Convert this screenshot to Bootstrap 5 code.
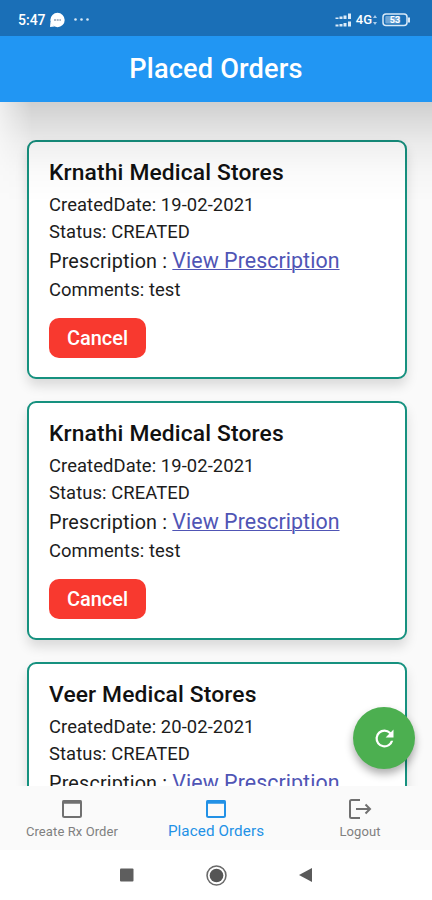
<!DOCTYPE html>
<html lang="en">
<head>
<meta charset="utf-8">
<meta name="viewport" content="width=device-width, initial-scale=1">
<title>Placed Orders</title>
<link href="https://cdn.jsdelivr.net/npm/bootstrap@5.3.0/dist/css/bootstrap.min.css" rel="stylesheet">
<style>
body{font-family:Roboto,"Liberation Sans",sans-serif;background:#fafafa;color:#1c1c1c}
.phone{width:432px;height:900px}
.statusbar{height:36px;background:#1a6fb7;padding:3px 21px 0 18px;font-size:14px;font-weight:500;line-height:1}
.network{font-size:13px}
.appbar{height:66px;background:#2196f3;font-size:27.2px;font-weight:500;letter-spacing:.15px;padding-top:1px}
.orders{height:684px;padding:38px 25px 0 27px;gap:22px}
.orders::before{content:"";position:absolute;inset:0 0 auto 0;height:100px;z-index:2;pointer-events:none;
 background:linear-gradient(rgba(0,0,0,.17),rgba(0,0,0,.115) 20%,rgba(0,0,0,.06) 42%,rgba(0,0,0,.02) 70%,transparent);
 -webkit-mask-image:linear-gradient(90deg,rgba(0,0,0,.3),#000 32px);mask-image:linear-gradient(90deg,rgba(0,0,0,.3),#000 32px)}
.order{height:239px;border:2px solid #16917f;border-radius:9px;padding:16px 20px;box-shadow:0 7px 12px rgba(0,0,0,.13);font-size:18.4px;letter-spacing:.08px}
.order h2{font-size:22.8px;line-height:30px;font-weight:500;letter-spacing:.15px;margin:0 0 3px;color:#111}
.line{line-height:27px}
.rx{font-size:19.8px;line-height:31px;letter-spacing:.17px}
.rx a{font-size:21.4px;letter-spacing:.05px;color:#5055b5;text-decoration-thickness:1px}
.comments{line-height:26px}
.cancel{width:97px;height:40px;margin-top:15px;border-radius:10px;background:#f8392f;color:#fff;font-size:20px;font-weight:500;padding:0;border:0}
.refresh{width:62px;height:62px;right:17px;bottom:17px;background:#4caf50;z-index:3;box-shadow:0 5px 9px rgba(0,0,0,.32);border:0;padding:0}
.tabs{height:64px;background:#fafafa;padding-top:12px;font-size:13px;color:#808080}
.tabs a{width:144px;color:inherit;line-height:20px}
.tabs a span{letter-spacing:.1px}
.tabs a.current{color:#2291e6;font-size:15.2px}
.tabs svg{margin-bottom:2px}
.tabs a.current svg{margin-bottom:1px}
.sysbar{height:50px;background:#fff;padding:0 119px 0 119px}
</style>
</head>
<body>
<div class="phone d-flex flex-column overflow-hidden">
 <div class="statusbar d-flex align-items-center justify-content-between text-white flex-shrink-0">
  <div class="d-flex align-items-center">
   <span>5:47</span>
   <svg class="ms-1" width="44" height="16" viewBox="2.500 0 44 16"><path d="M2.500 15l.5-5 4 4.500z" fill="#fff"/><circle cx="10" cy="8" r="7.200" fill="#fff"/><path d="M6.500 8h7" stroke="#8d9db3" stroke-width="1.500" stroke-dasharray="2 .7"/><g fill="#d8e8f6"><circle cx="28" cy="7.500" r="1.300"/><circle cx="34" cy="7.500" r="1.300"/><circle cx="40" cy="7.500" r="1.300"/></g></svg>
  </div>
  <div class="d-flex align-items-center">
   <svg width="17" height="14" viewBox="0 0 17 14" stroke="#dcebf8" stroke-width="3"><path d="M2 6V4.500M6 6V3.500M10 6V2.500M14.500 6V.5M2 13.500V11.500M6 13.500V11M10 13.500V10M14.500 13.500V8.500"/></svg>
   <span class="network ms-1">4G</span>
   <svg width="6" height="12" viewBox="0 0 6 12" fill="#a9cdec"><path d="M1 4l2-3 2 3zM1 8l2 3 2-3z"/></svg>
   <svg class="ms-1" width="29" height="14" viewBox="0 0 29 14"><rect x="1" y="1" width="24" height="11.500" rx="3" fill="none" stroke="#d8e9f7" stroke-width="1.500"/><rect x="3.300" y="3" width="15" height="7.500" rx="1" fill="#6fa6d6"/><path d="M27 4.500v5" stroke="#d8e9f7" stroke-width="2"/><text x="13" y="10" font-size="9" font-weight="700" text-anchor="middle" fill="#fff">53</text></svg>
  </div>
 </div>
 <header class="appbar d-flex align-items-center justify-content-center text-white flex-shrink-0">Placed Orders</header>
 <main class="orders position-relative d-flex flex-column overflow-hidden flex-shrink-0">
  <article class="order bg-white flex-shrink-0"><h2>Krnathi Medical Stores</h2><div class="line">CreatedDate: 19-02-2021</div><div class="line">Status: CREATED</div><div class="rx">Prescription : <a href="#">View Prescription</a></div><div class="comments">Comments: test</div><button class="cancel btn d-block">Cancel</button></article>
  <article class="order bg-white flex-shrink-0"><h2>Krnathi Medical Stores</h2><div class="line">CreatedDate: 19-02-2021</div><div class="line">Status: CREATED</div><div class="rx">Prescription : <a href="#">View Prescription</a></div><div class="comments">Comments: test</div><button class="cancel btn d-block">Cancel</button></article>
  <article class="order bg-white flex-shrink-0"><h2>Veer Medical Stores</h2><div class="line">CreatedDate: 20-02-2021</div><div class="line">Status: CREATED</div><div class="rx">Prescription : <a href="#">View Prescription</a></div></article>
  <button class="refresh position-absolute rounded-circle d-flex align-items-center justify-content-center" aria-label="Refresh"><svg width="27" height="27" viewBox="0 0 24 24" fill="#fff"><path d="M17.650 6.350A7.960 7.960 0 0 0 12 4a8 8 0 1 0 7.730 10h-2.080A6 6 0 1 1 12 6c1.660 0 3.140.69 4.220 1.780L13 11h7V4z"/></svg></button>
 </main>
 <nav class="tabs d-flex flex-shrink-0">
  <a href="#" class="d-flex flex-column align-items-center text-decoration-none"><svg width="22" height="22" viewBox="0 0 22 22"><rect x="2" y="3" width="18" height="16" rx="1.500" fill="none" stroke="#707070" stroke-width="2"/><path d="M1.500 4h19" stroke="#707070" stroke-width="3.500"/></svg><span>Create Rx Order</span></a>
  <a href="#" class="current d-flex flex-column align-items-center text-decoration-none"><svg width="22" height="22" viewBox="0 0 22 22"><rect x="2" y="3" width="18" height="16" rx="1.500" fill="none" stroke="#2291e6" stroke-width="2"/><path d="M1.500 4h19" stroke="#2291e6" stroke-width="3.500"/></svg><span>Placed Orders</span></a>
  <a href="#" class="d-flex flex-column align-items-center text-decoration-none"><svg width="24" height="22" viewBox="0 0 24 22" fill="none" stroke="#707070" stroke-width="2"><path d="M12 2H3.500Q2 2 2 3.500v15Q2 20 3.500 20H12M8 11h14M17.500 6.500L22 11l-4.500 4.500"/></svg><span>Logout</span></a>
 </nav>
 <div class="sysbar d-flex align-items-center justify-content-between flex-shrink-0">
  <svg width="15" height="14" viewBox="0 0 15 14"><rect x="1" y=".5" width="13.500" height="13" rx="1" fill="#5e5e5e"/></svg>
  <svg width="21" height="21" viewBox="0 0 20 20"><circle cx="10" cy="10" r="9" fill="none" stroke="#6a6a6a" stroke-width="1.500"/><circle cx="10" cy="10" r="6.500" fill="#555"/></svg>
  <svg width="15" height="16" viewBox="0 0 15 16"><path d="M1 8L14 1v14z" fill="#5a5a5a"/></svg>
 </div>
</div>
<script src="https://cdn.jsdelivr.net/npm/bootstrap@5.3.0/dist/js/bootstrap.bundle.min.js"></script>
</body>
</html>
